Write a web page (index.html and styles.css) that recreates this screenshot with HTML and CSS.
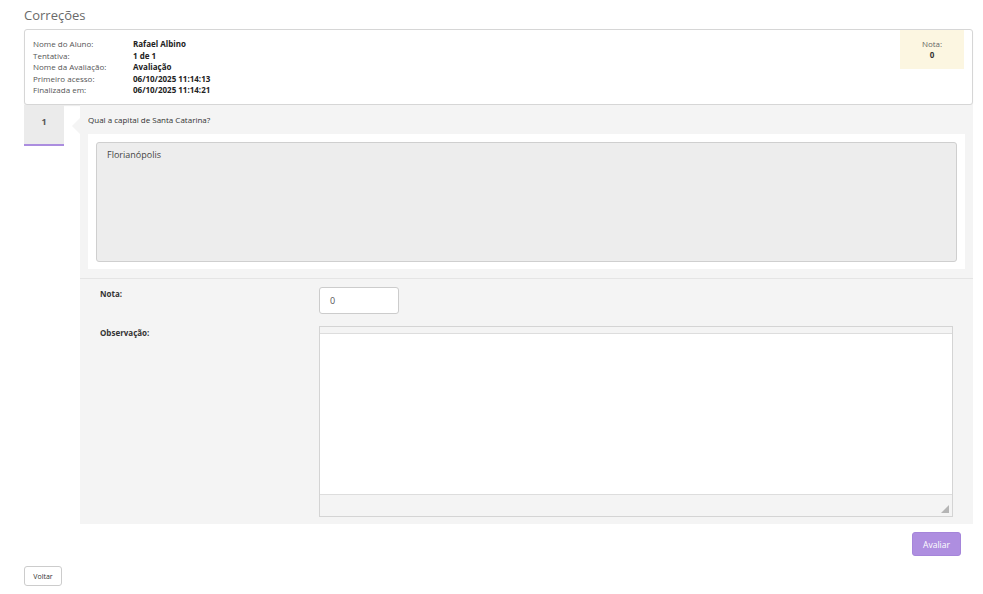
FILE: index.html
```html
<!DOCTYPE html>
<html lang="pt-BR">
<head>
<meta charset="utf-8">
<title>Correções</title>
<link rel="stylesheet" href="styles.css">
</head>
<body>
<div class="page">
  <h1 class="title">Correções</h1>
  <div class="info-card">
    <div class="info-grid">
      <span class="lbl">Nome do Aluno:</span><span class="val">Rafael Albino</span>
      <span class="lbl">Tentativa:</span><span class="val">1 de 1</span>
      <span class="lbl">Nome da Avaliação:</span><span class="val">Avaliação</span>
      <span class="lbl">Primeiro acesso:</span><span class="val">06/10/2025 11:14:13</span>
      <span class="lbl">Finalizada em:</span><span class="val">06/10/2025 11:14:21</span>
    </div>
    <div class="grade-box">
      <span class="grade-lbl">Nota:</span>
      <span class="grade-val">0</span>
    </div>
  </div>

  <div class="question-row">
    <div class="q-tab"><span>1</span></div>
    <div class="q-main">
      <div class="q-panel">
        <p class="q-text">Qual a capital de Santa Catarina?</p>
        <div class="answer-wrap">
          <div class="answer">Florianópolis</div>
        </div>
      </div>
      <div class="form-area">
        <div class="form-row">
          <label class="f-lbl">Nota:</label>
          <div class="f-input">0</div>
        </div>
        <div class="form-row obs">
          <label class="f-lbl">Observação:</label>
          <div class="editor">
            <div class="ed-top"></div>
            <div class="ed-body"></div>
            <div class="ed-bottom"><span class="grip"></span></div>
          </div>
        </div>
      </div>
      <div class="actions">
        <button class="btn-primary">Avaliar</button>
      </div>
    </div>
  </div>
  <div class="footer">
    <button class="btn-default">Voltar</button>
  </div>
</div>
</body>
</html>
```

FILE: styles.css
```css
* { box-sizing: border-box; }
html, body { margin: 0; padding: 0; background: #fff; }
body {
  font-family: "Open Sans", "Noto Sans", sans-serif;
  color: #333;
}
.page { padding: 6px 10px 0 24px; }
.title {
  margin: 0;
  font-size: 13px;
  font-weight: 400;
  color: #6a6a6a;
  line-height: 18px;
  height: 23px;
}
.info-card {
  display: flex;
  justify-content: space-between;
  border: 1px solid #d6d6d6;
  border-radius: 3px;
  box-shadow: 0 1px 1px rgba(0,0,0,0.08);
  height: 76px;
  padding: 0 8px 0 8px;
  background: #fff;
}
.info-grid {
  display: grid;
  grid-template-columns: 100px auto;
  grid-auto-rows: 11.5px;
  padding-top: 8px;
  font-size: 8px;
  line-height: 11.5px;
}
.lbl { color: #555; }
.val { color: #222; font-weight: 700; }
.grade-box {
  width: 64px;
  height: 39px;
  background: #fcf6e1;
  display: flex;
  flex-direction: column;
  align-items: center;
  padding-top: 8px;
  font-size: 8px;
  line-height: 11px;
}
.grade-lbl { color: #666; }
.grade-val { font-weight: 700; color: #333; }

.question-row { display: flex; }
.q-tab {
  width: 40px;
  height: 41px;
  background: #ebebeb;
  border-bottom: 2px solid #ab8ddf;
  display: flex;
  justify-content: center;
  padding-top: 10px;
  font-size: 9px;
  font-weight: 700;
  color: #555;
  flex-shrink: 0;
}
.q-main { flex: 1; margin-left: 16px; }
.q-panel {
  position: relative;
  background: #f4f4f4;
  padding: 10px 8px 9px 8px;
  border-bottom: 1px solid #e4e4e4;
}
.q-panel::before {
  content: "";
  position: absolute;
  left: -8px;
  top: 13px;
  border-style: solid;
  border-width: 8px 8px 8px 0;
  border-color: transparent #f4f4f4 transparent transparent;
}
.q-text {
  margin: 0 0 9px 0;
  font-size: 8px;
  line-height: 10px;
  color: #333;
}
.answer-wrap {
  background: #fff;
  padding: 8px 8px 7px 8px;
}
.answer {
  height: 120px;
  background: #ededed;
  border: 1px solid #cfcfcf;
  border-radius: 3px;
  padding: 6px 10px;
  font-size: 9px;
  line-height: 12px;
  color: #444;
}
.form-area {
  background: #f4f4f4;
  padding: 8px 20px 7px 20px;
}
.form-row { display: grid; grid-template-columns: 219px 1fr; }
.form-row.obs { margin-top: 12px; }
.f-lbl {
  font-size: 8px;
  font-weight: 700;
  color: #333;
  line-height: 10px;
  padding-top: 2px;
}
.f-input {
  width: 80px;
  height: 27px;
  background: #fff;
  border: 1px solid #ccc;
  border-radius: 3px;
  font-size: 9px;
  line-height: 25px;
  padding-left: 10px;
  color: #555;
}
.editor {
  border: 1px solid #d4d4d4;
  background: #fff;
  display: flex;
  flex-direction: column;
  height: 191px;
}
.ed-top { height: 7px; background: #f4f4f4; border-bottom: 1px solid #ddd; }
.ed-body { flex: 1; background: #fff; }
.ed-bottom {
  height: 22px;
  background: #f4f4f4;
  border-top: 1px solid #ddd;
  position: relative;
}
.grip {
  position: absolute;
  right: 3px;
  bottom: 3px;
  width: 0; height: 0;
  border-style: solid;
  border-width: 0 0 8px 8px;
  border-color: transparent transparent #b5b5b5 transparent;
}
.actions {
  display: flex;
  justify-content: flex-end;
  padding: 8px 12px 0 0;
}
.btn-primary {
  width: 49px;
  height: 24px;
  background: #ae8ee0;
  border: 1px solid #a585da;
  border-radius: 3px;
  color: #fff;
  font-family: "Open Sans", "Noto Sans", sans-serif;
  font-size: 8.5px;
  padding: 0;
}
.footer { display: flex; padding-top: 10px; }
.btn-default {
  width: 38px;
  height: 20px;
  background: #fff;
  border: 1px solid #ccc;
  border-radius: 3px;
  color: #333;
  font-family: "Open Sans", "Noto Sans", sans-serif;
  font-size: 7px;
  padding: 0;
}
```
